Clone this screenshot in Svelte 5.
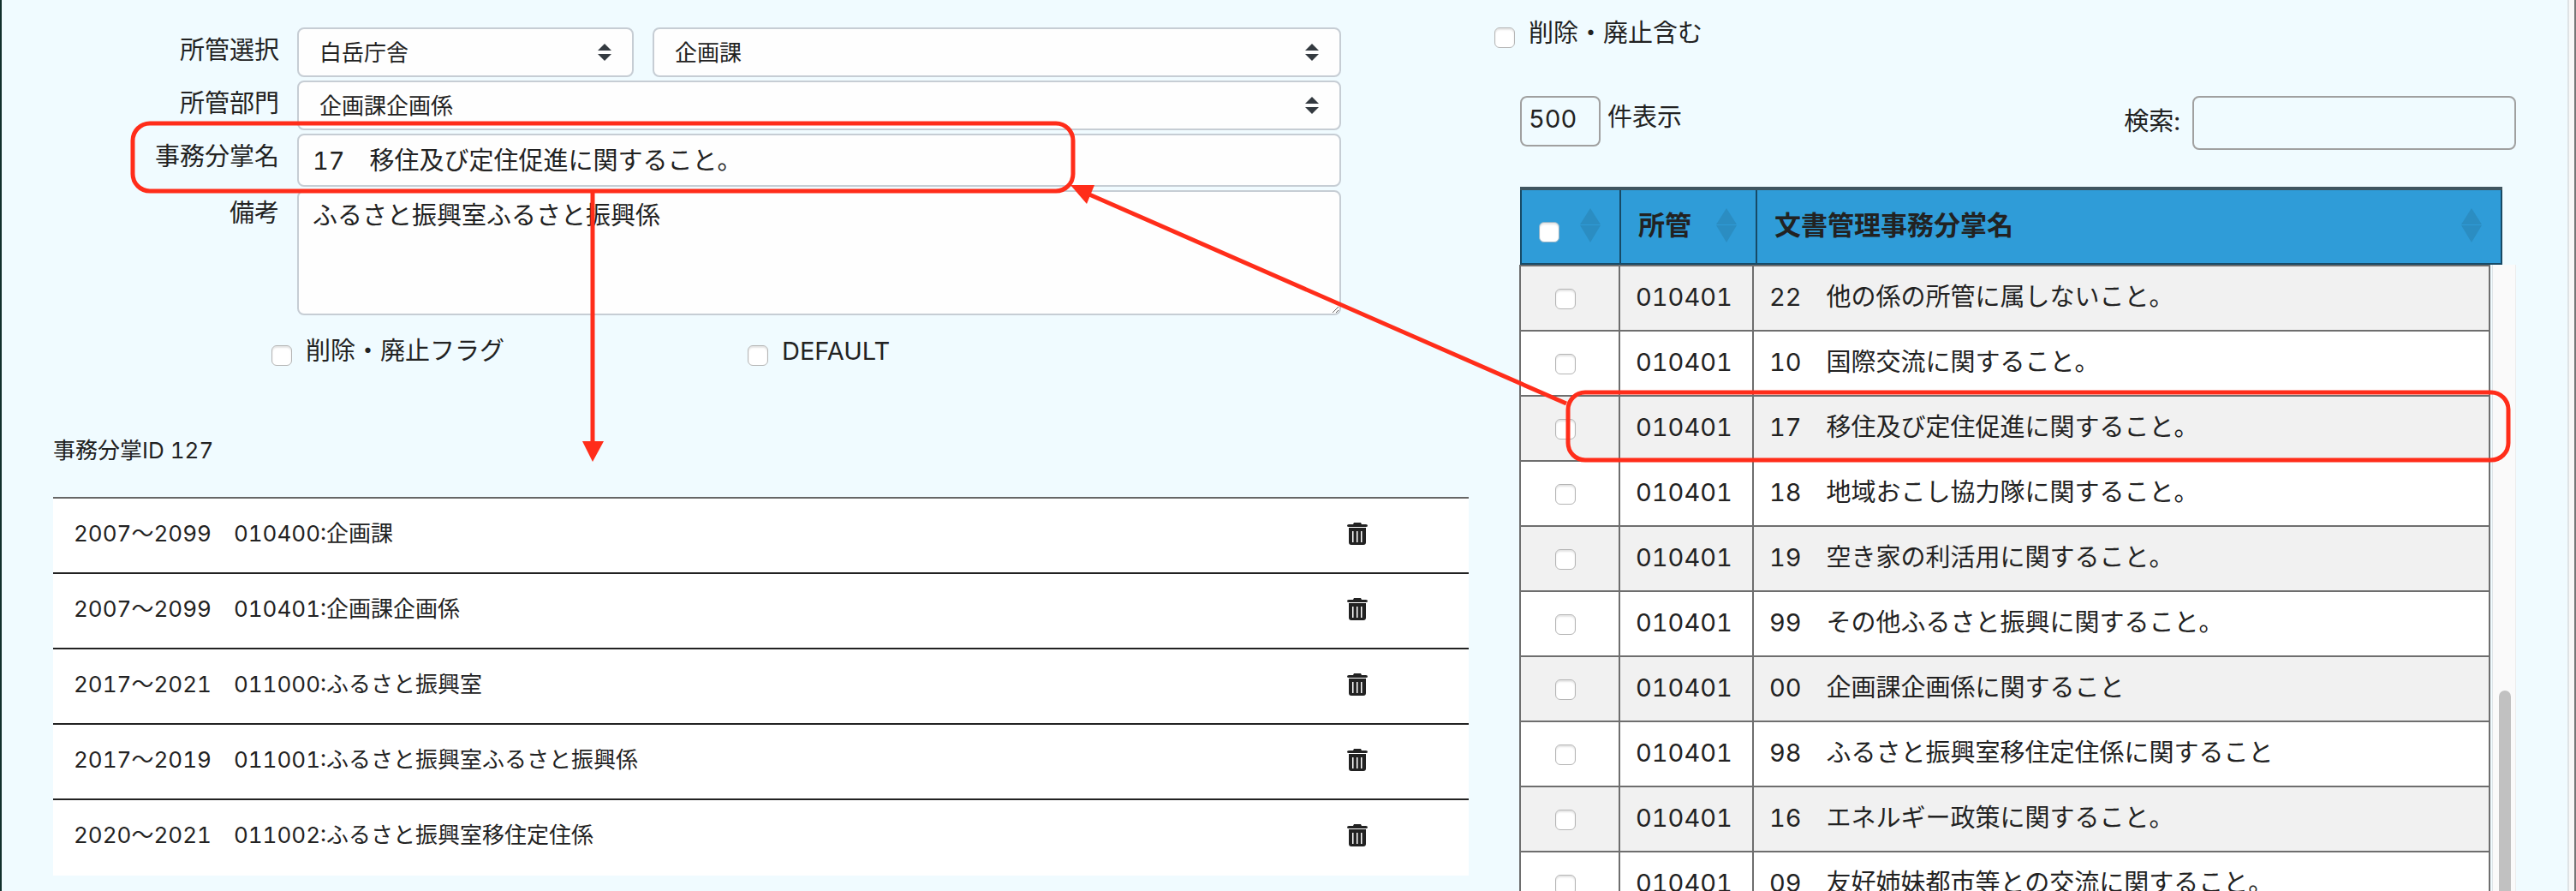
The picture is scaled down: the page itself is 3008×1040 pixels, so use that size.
<script>
  const offices = ["白岳庁舎"];
  const sections = ["企画課"];
  const departments = ["企画課企画係"];

  let name = "17　移住及び定住促進に関すること。";
  let note = "ふるさと振興室ふるさと振興係";
  let count = "500";
  let search = "";

  const histories = [
    "2007〜2099　010400:企画課",
    "2007〜2099　010401:企画課企画係",
    "2017〜2021　011000:ふるさと振興室",
    "2017〜2019　011001:ふるさと振興室ふるさと振興係",
    "2020〜2021　011002:ふるさと振興室移住定住係",
  ];

  const rows = [
    { code: "010401", title: "22　他の係の所管に属しないこと。" },
    { code: "010401", title: "10　国際交流に関すること。" },
    { code: "010401", title: "17　移住及び定住促進に関すること。" },
    { code: "010401", title: "18　地域おこし協力隊に関すること。" },
    { code: "010401", title: "19　空き家の利活用に関すること。" },
    { code: "010401", title: "99　その他ふるさと振興に関すること。" },
    { code: "010401", title: "00　企画課企画係に関すること" },
    { code: "010401", title: "98　ふるさと振興室移住定住係に関すること" },
    { code: "010401", title: "16　エネルギー政策に関すること。" },
    { code: "010401", title: "09　友好姉妹都市等との交流に関すること。" },
  ];
</script>

{#snippet picker(id, options, label)}
  <div class="picker">
    <select {id} aria-label={label}>
      {#each options as option}
        <option>{option}</option>
      {/each}
    </select>
    <svg class="caret" viewBox="0 0 16 20" aria-hidden="true">
      <path d="M8 0 16 8H0zM0 12h16l-8 8z" />
    </svg>
  </div>
{/snippet}

{#snippet sorter()}
  <svg class="sorter" viewBox="0 0 24 40" aria-hidden="true">
    <path d="M12 0 24 19H0zM0 20h24L12 40z" />
  </svg>
{/snippet}

<main class="page">
  <section class="detail">
    <form>
      <label for="office">所管選択</label>
      <div class="pair">
        {@render picker("office", offices, "所管選択")}
        {@render picker("section", sections, "課")}
      </div>
      <label for="department">所管部門</label>
      {@render picker("department", departments, "所管部門")}
      <label for="name">事務分掌名</label>
      <input id="name" class="name" type="text" bind:value={name} />
      <label for="note">備考</label>
      <textarea id="note" bind:value={note}></textarea>
    </form>

    <div class="flags">
      <label class="check"><input type="checkbox" />削除・廃止フラグ</label>
      <label class="check"><input type="checkbox" />DEFAULT</label>
    </div>

    <p class="ident">事務分掌ID 127</p>

    <ul class="histories">
      {#each histories as history}
        <li>
          <span>{history}</span>
          <button type="button" aria-label="削除">
            <svg viewBox="0 0 24 26" aria-hidden="true">
              <path d="M8 0h8l1 2h5q2 0 2 1.500T22 5H2Q0 5 0 3.500T2 2h5z" />
              <path
                fill-rule="evenodd"
                d="M2 6h20v17q0 3-3 3H5q-3 0-3-3zM6 10v13h1.500V10zM11 10v13h1.500V10zM16 10v13h1.500V10z"
              />
            </svg>
          </button>
        </li>
      {/each}
    </ul>
  </section>

  <section class="listing">
    <label class="check"><input type="checkbox" />削除・廃止含む</label>

    <div class="tools">
      <label class="count"><input type="text" bind:value={count} />件表示</label>
      <label class="search">検索:<input type="search" bind:value={search} /></label>
    </div>

    <table class="head">
      <thead>
        <tr>
          <th class="pick">
            <div><input type="checkbox" aria-label="全選択" />{@render sorter()}</div>
          </th>
          <th class="code"><div>所管{@render sorter()}</div></th>
          <th><div>文書管理事務分掌名{@render sorter()}</div></th>
        </tr>
      </thead>
    </table>

    <div class="scroller">
      <table class="body">
        <tbody>
          {#each rows as row}
            <tr>
              <td class="pick"><input type="checkbox" aria-label={row.title} /></td>
              <td class="code">{row.code}</td>
              <td>{row.title}</td>
            </tr>
          {/each}
        </tbody>
      </table>
      <div class="track"><div class="thumb"></div></div>
    </div>
  </section>

  <svg class="marks" aria-hidden="true">
    <rect x="155" y="144" width="1098" height="79" rx="20" />
    <rect x="1831" y="458" width="1098" height="79" rx="20" />
    <path d="M692 225V516M1829 471 1272 227" />
    <path class="tip" d="M680 515h25l-13 24zM1250 216l28 0-9 22z" />
  </svg>
</main>

<style>
  :global(body) {
    background: #f0fbff;
  }

  .page,
  .page * {
    box-sizing: border-box;
  }

  .page {
    position: relative;
    display: grid;
    grid-template-columns: 1653fr 1193fr;
    gap: 30px;
    height: 100vh;
    padding: 0 68px 0 60px;
    overflow: hidden;
    border-left: 2px solid #12302c;
    border-right: 2px solid #777;
    box-shadow:
      inset -6px 0 #f8f8f8,
      inset -8px 0 #dfe3e5;
    color: #222;
    font-family: Inter, "Noto Sans CJK JP", sans-serif;
    font-size: 29px;
    font-weight: 400;
    font-variant-numeric: tabular-nums;
    line-height: 40px;
  }

  input,
  select,
  textarea,
  button {
    margin: 0;
    color: inherit;
    font: inherit;
    font-variant-numeric: inherit;
  }

  /* form */

  form {
    display: grid;
    grid-template-columns: 264px 1fr;
    gap: 4px 21px;
    padding: 32px 149px 0 0;
  }

  form > label {
    line-height: 54px;
    text-align: right;
  }

  .pair {
    display: grid;
    grid-template-columns: 393fr 804fr;
    gap: 22px;
  }

  .picker {
    position: relative;
  }

  select,
  .name,
  textarea {
    display: block;
    width: 100%;
    border: 2px solid #c6cdd4;
    border-radius: 8px;
    background: #fefefe;
  }

  select {
    height: 58px;
    padding: 2px 24px 0;
    appearance: none;
    font-size: 26px;
  }

  .caret {
    position: absolute;
    top: 19px;
    right: 26px;
    width: 16px;
    height: 20px;
    fill: #343a40;
    pointer-events: none;
  }

  .name {
    height: 62px;
    padding: 0 16px 4px;
  }

  textarea {
    height: 146px;
    padding: 8px 16px;
  }

  input[type="checkbox"] {
    flex: none;
    width: 24px;
    height: 24px;
    appearance: none;
    border: 1px solid #b5b5b5;
    border-radius: 6px;
    background: #fff;
    box-shadow: inset 0 2px 2px #e4e4e4;
  }

  .check {
    display: flex;
    gap: 16px;
  }

  .check input {
    margin-top: 13px;
  }

  .flags {
    display: grid;
    grid-template-columns: 556px auto;
    padding: 22px 0 0 255px;
  }

  .ident {
    margin: 0;
    padding: 76px 0 34px;
    font-size: 26px;
  }

  .histories {
    margin: 0;
    padding: 0;
    border-top: 2px solid #666;
    background: #fff;
    font-size: 26px;
    list-style: none;
  }

  .histories li {
    display: flex;
    align-items: center;
    justify-content: space-between;
    height: 88px;
    padding: 0 118px 4px 24px;
    border-bottom: 2px solid #222;
  }

  .histories li:last-child {
    border-bottom-color: #fff;
  }

  button {
    padding: 0;
    border: 0;
    background: none;
  }

  button svg {
    display: block;
    width: 24px;
    height: 26px;
    fill: #222;
  }

  /* listing */

  .listing {
    display: flex;
    flex-direction: column;
    min-height: 0;
    padding-top: 19px;
  }

  .tools {
    display: flex;
    justify-content: space-between;
    padding: 53px 0 43px 30px;
  }

  .tools label {
    display: flex;
    gap: 8px;
  }

  .tools input {
    padding: 0 8px;
    border: 2px solid #a0a0a0;
    border-radius: 8px;
    background: none;
  }

  .count {
    line-height: 50px;
  }

  .count input {
    width: 94px;
    height: 59px;
    padding-bottom: 6px;
  }

  .tools .search {
    gap: 14px;
    line-height: 60px;
  }

  .search input {
    width: 378px;
    height: 63px;
  }

  table {
    border-collapse: collapse;
    table-layout: fixed;
  }

  .head {
    width: calc(100% - 46px);
    margin-left: 30px;
    border-top: 3px double #8c8c8c;
  }

  th {
    height: 88px;
    padding: 0 22px 4px 20px;
    border: 2px solid #174a66;
    border-top: 4px solid #3f5560;
    background: #2f9cd8;
    font-size: 31px;
    text-align: left;
  }

  th div {
    display: flex;
    align-items: center;
    justify-content: space-between;
  }

  th input[type="checkbox"] {
    align-self: flex-end;
    border-color: #8fb3c8;
  }

  .sorter {
    width: 24px;
    height: 40px;
    fill: #2b8dc2;
  }

  th.pick {
    width: 116px;
  }

  th.code {
    width: 159px;
  }

  .scroller {
    display: flex;
    flex: 1;
    align-items: flex-start;
    min-height: 0;
    margin-left: 29px;
    overflow: hidden;
  }

  .body {
    flex: 1;
    border-top: 2px solid #fff;
    background: #fff;
  }

  td {
    height: 76px;
    padding: 0 18px 2px;
    border: 2px solid #6e6e6e;
  }

  td.pick {
    width: 116px;
    padding: 2px 10px 0 0;
  }

  td.code {
    width: 156px;
    white-space: nowrap;
  }

  td input[type="checkbox"] {
    display: block;
    margin: 0 auto;
  }

  tbody tr:nth-child(odd) {
    background: #f1f1f1;
  }

  .track {
    align-self: stretch;
    flex: none;
    width: 28px;
    margin-left: 2px;
    padding: 497px 5px 0 7px;
    border-left: 1px solid #dfe5e8;
    border-right: 1px solid #ececec;
    background: #fafafa;
  }

  .thumb {
    height: 100%;
    border-radius: 8px 8px 0 0;
    background: #c1c1c1;
  }

  /* red call-outs over both panes */

  .marks {
    position: absolute;
    top: 0;
    left: -2px;
    width: calc(100% + 4px);
    height: 100%;
    fill: none;
    stroke: #ff2d1a;
    stroke-width: 5px;
    pointer-events: none;
  }

  .tip {
    fill: #ff2d1a;
    stroke: none;
  }
</style>
